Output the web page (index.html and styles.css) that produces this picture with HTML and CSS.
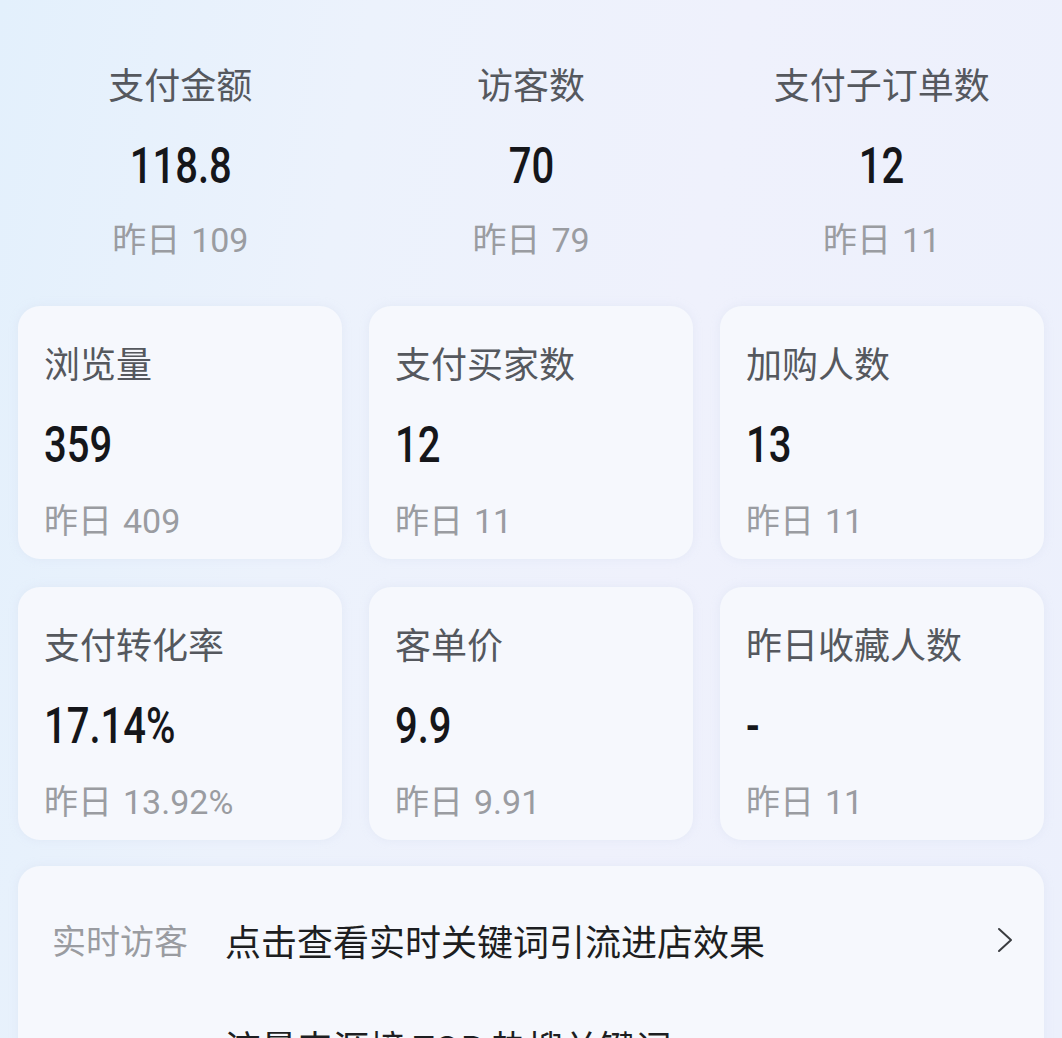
FILE: index.html
```html
<!DOCTYPE html>
<html lang="zh-CN">
<head>
<meta charset="utf-8">
<title>数据概览</title>
<link rel="stylesheet" href="styles.css">
</head>
<body>
<div class="page">
  <section class="summary">
    <div class="sum-item">
      <div class="label">支付金额</div>
      <div class="value"><span class="num">118.8</span></div>
      <div class="sub">昨日<span class="sn">109</span></div>
    </div>
    <div class="sum-item">
      <div class="label">访客数</div>
      <div class="value"><span class="num">70</span></div>
      <div class="sub">昨日<span class="sn">79</span></div>
    </div>
    <div class="sum-item">
      <div class="label">支付子订单数</div>
      <div class="value"><span class="num">12</span></div>
      <div class="sub">昨日<span class="sn">11</span></div>
    </div>
  </section>

  <section class="grid">
    <div class="card">
      <div class="label">浏览量</div>
      <div class="value"><span class="num">359</span></div>
      <div class="sub">昨日<span class="sn">409</span></div>
    </div>
    <div class="card">
      <div class="label">支付买家数</div>
      <div class="value"><span class="num">12</span></div>
      <div class="sub">昨日<span class="sn">11</span></div>
    </div>
    <div class="card">
      <div class="label">加购人数</div>
      <div class="value"><span class="num">13</span></div>
      <div class="sub">昨日<span class="sn">11</span></div>
    </div>
    <div class="card">
      <div class="label">支付转化率</div>
      <div class="value"><span class="num">17.14%</span></div>
      <div class="sub">昨日<span class="sn">13.92%</span></div>
    </div>
    <div class="card">
      <div class="label">客单价</div>
      <div class="value"><span class="num">9.9</span></div>
      <div class="sub">昨日<span class="sn">9.91</span></div>
    </div>
    <div class="card">
      <div class="label">昨日收藏人数</div>
      <div class="value"><span class="num">-</span></div>
      <div class="sub">昨日<span class="sn">11</span></div>
    </div>
  </section>

  <section class="panel">
    <div class="row">
      <div class="row-label">实时访客</div>
      <div class="row-text">点击查看实时关键词引流进店效果</div>
      <svg class="chev" width="18" height="28" viewBox="0 0 18 28"><polyline points="3,3 15,14 3,25" fill="none" stroke="#3a3c40" stroke-width="2" stroke-linecap="round" stroke-linejoin="round"/></svg>
    </div>
    <div class="row">
      <div class="row-label"></div>
      <div class="row-text">流量来源榜 TOP 热搜关键词</div>
    </div>
  </section>
</div>
</body>
</html>
```

FILE: styles.css
```css
html, body {
  margin: 0;
  padding: 0;
}
body {
  width: 1062px;
  height: 1038px;
  overflow: hidden;
  font-family: "Noto Sans CJK SC", "Noto Sans", sans-serif;
  background: linear-gradient(100deg, #e3f0fc 0%, #ecf2fc 30%, #eff1fc 60%, #ecf0fc 100%);
}
.page {
  display: flex;
  flex-direction: column;
}

.summary {
  display: grid;
  grid-template-columns: repeat(3, 1fr);
  padding: 61px 5px 0;
}
.sum-item {
  display: flex;
  flex-direction: column;
  align-items: center;
}
.label {
  font-size: 36px;
  line-height: 44px;
  color: #55585e;
  white-space: nowrap;
}
.value {
  height: 60px;
  line-height: 60px;
  margin-top: 31px;
}
.num {
  display: inline-block;
  font-family: Roboto, "Noto Sans", sans-serif;
  font-weight: 500;
  font-size: 50px;
  color: #15161a;
  transform: scaleX(0.8);
}
.sum-item .num {
  transform-origin: center;
}
.sub {
  height: 44px;
  font-size: 34px;
  line-height: 44px;
  color: #9a9ca1;
  margin-top: 20px;
  white-space: nowrap;
}
.sn {
  font-family: Roboto, "Noto Sans", sans-serif;
  font-size: 34px;
  line-height: 34px;
  margin-left: 11px;
}

.grid {
  display: grid;
  grid-template-columns: repeat(3, 324px);
  column-gap: 27px;
  row-gap: 28px;
  margin: 46px 18px 0;
}
.card {
  height: 253px;
  box-sizing: border-box;
  padding: 34px 26px 0;
  border-radius: 22px;
  background: #f6f8fd;
  box-shadow: 0 0 8px rgba(205, 214, 236, 0.35);
  display: flex;
  flex-direction: column;
}
.card .num {
  transform-origin: left center;
}
.card .sub {
  margin-top: 22px;
}

.panel {
  margin: 26px 18px 0;
  border-radius: 22px 22px 0 0;
  background: #f6f8fd;
  box-shadow: 0 0 8px rgba(205, 214, 236, 0.35);
  padding: 52px 30px 40px 34px;
  display: flex;
  flex-direction: column;
  gap: 62px;
}
.row {
  display: flex;
  align-items: center;
  height: 44px;
}
.row-label {
  width: 173px;
  flex: none;
  font-size: 34px;
  line-height: 44px;
  color: #9a9ca1;
}
.row-text {
  flex: 1;
  font-size: 36px;
  line-height: 44px;
  color: #1d1e21;
  white-space: nowrap;
}
.chev {
  flex: none;
}
```
